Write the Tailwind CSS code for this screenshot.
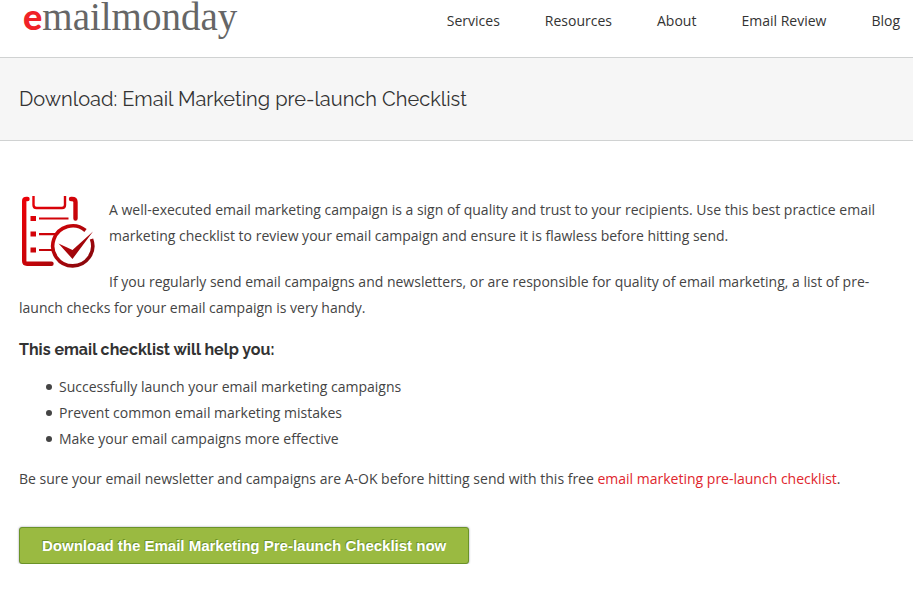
<!DOCTYPE html>
<html lang="en">
<head>
<meta charset="utf-8">
<meta name="viewport" content="width=device-width, initial-scale=1">
<title>Download: Email Marketing pre-launch Checklist</title>
<script src="https://cdn.jsdelivr.net/npm/@tailwindcss/browser@4"></script>
</head>
<body class="bg-white font-['Open_Sans',sans-serif] text-[14px] leading-[26px] text-[#444444]">
<header class="flex h-[58px] items-start justify-between border-b border-[#d0d2d2] pl-[23px] pr-[13px]">
  <a href="#" class="flex items-baseline font-['Liberation_Serif',serif] text-[39px] leading-8 text-[#666666]"><span class="font-['Lato',sans-serif] text-[36px] font-black leading-8 text-[#f02227]">e</span>mailmonday</a>
  <nav class="flex gap-[45px] pt-2 text-[#333333]">
    <a href="#">Services</a>
    <a href="#">Resources</a>
    <a href="#">About</a>
    <a href="#">Email Review</a>
    <a href="#">Blog</a>
  </nav>
</header>
<section class="border-b border-[#d0d2d2] bg-[#f6f6f6] px-[19px] py-7">
  <h1 class="font-[Raleway,Lato,sans-serif] text-[20px] leading-[26px] text-[#333333]">Download: Email Marketing pre-launch Checklist</h1>
</section>
<main class="px-[19px] pt-14">
  <svg class="float-left mr-[10px] h-[80px] w-[80px] overflow-visible" viewBox="0 0 80 80" fill="none" role="img" aria-label="Checklist">
    <defs>
      <linearGradient id="red" x1="0" y1="0" x2="76" y2="76" gradientUnits="userSpaceOnUse">
        <stop offset="0" stop-color="#f00008"/>
        <stop offset=".5" stop-color="#c90409"/>
        <stop offset="1" stop-color="#7c080c"/>
      </linearGradient>
    </defs>
    <g transform="translate(0 -4)" stroke="url(#red)">
      <path d="M8.500 6H7.500Q5.200 6 5.200 8V68Q5.200 70.700 8 70.700H32.500" stroke-width="4.400" stroke-linecap="round"/>
      <path d="M52 6H53Q56.500 6 56.500 9V25.500" stroke-width="4.400" stroke-linecap="round"/>
      <path d="M14.500 3V12Q14.500 15 17.500 15H43Q46 15 46 12V3" stroke-width="2.400"/>
      <path d="M20 25.500H49.500M20 41.200H37M20 57H33" stroke-width="2.200"/>
      <path d="M66.500 37.500A20 20 0 1 0 72.500 46" stroke-width="3.600"/>
      <path d="M11.500 23H17V28H11.500ZM11.500 38.500H17V43.500H11.500ZM11.500 54.500H17V59.500H11.500ZM39.500 50.500L53.500 57L74 38.500L53.500 66Z" fill="url(#red)" stroke="none"/>
    </g>
  </svg>
  <p class="mb-5">A well-executed email marketing campaign is a sign of quality and trust to your recipients. Use this best practice email marketing checklist to review your email campaign and ensure it is flawless before hitting send.</p>
  <p>If you regularly send email campaigns and newsletters, or are responsible for quality of email marketing, a list of pre-launch checks for your email campaign is very handy.</p>
  <h2 class="mt-[17px] font-[Raleway,Lato,sans-serif] text-[16px] font-bold leading-6 text-[#333333]">This email checklist will help you:</h2>
  <ul class="mb-[14px] mt-3 pl-[27px]">
    <li class="flex items-center gap-[7px] before:size-[6px] before:rounded-full before:bg-[#444444]">Successfully launch your email marketing campaigns</li>
    <li class="flex items-center gap-[7px] before:size-[6px] before:rounded-full before:bg-[#444444]">Prevent common email marketing mistakes</li>
    <li class="flex items-center gap-[7px] before:size-[6px] before:rounded-full before:bg-[#444444]">Make your email campaigns more effective</li>
  </ul>
  <p>Be sure your email newsletter and campaigns are A-OK before hitting send with this free <a href="#" class="text-[#e0262d]">email marketing pre-launch checklist</a>.</p>
  <button type="button" class="mt-[35px] block rounded-[3px] border border-[#6b9328] bg-[#9aba41] px-[22px] pb-2 pt-[9px] font-['Liberation_Sans',sans-serif] text-[15px] font-bold leading-[18px] text-white shadow-[0_0_2px_rgba(60,60,90,0.6)] [text-shadow:-1px_-1px_0_#6b9328]">Download the Email Marketing Pre-launch Checklist now</button>
</main>
</body>
</html>
